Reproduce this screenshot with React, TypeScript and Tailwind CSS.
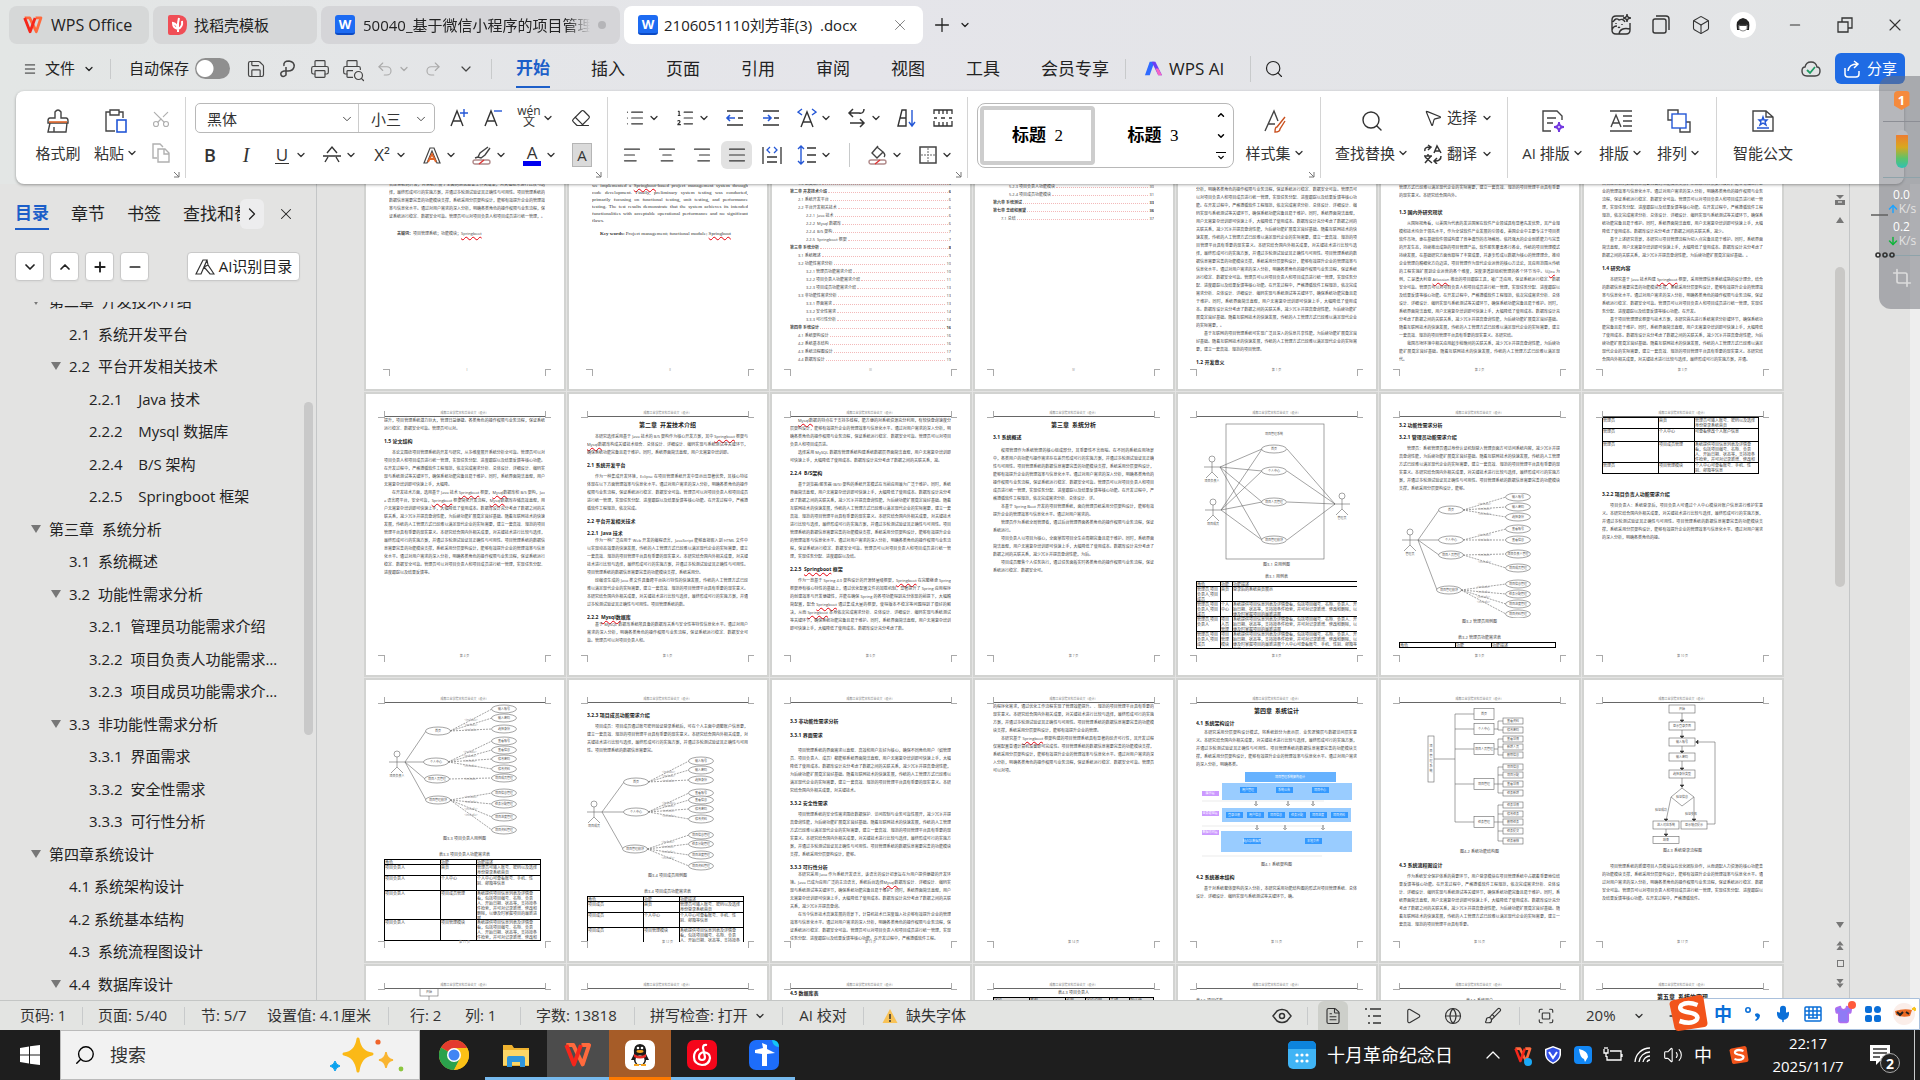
import type { ReactNode } from 'react';
import { clsx } from 'clsx';
import {
  AlignCenter, AlignJustify, AlignLeft, AlignRight, ArrowDown, ArrowUp, Box, Brush, ChevronDown, ChevronRight,
  ChevronUp, Copy, Crop, Eraser, FileText, Fullscreen, Globe, List, ListOrdered, Menu, Mic, Minus, MousePointer2,
  Play, Plus, Printer, Redo2, Save, Scissors, Search, Shirt, Undo2, Volume2, X,
} from 'lucide-react';

const PROSE =
  '项目管理系统的数据信息需要完善的功能模块支撑，系统采用分层架构设计，能够有效提升企业的管理效率与信息化水平。通过对用户需求的深入分析，明确各类角色的操作权限与业务流程，保证系统运行稳定、数据安全可靠。管理员可以对项目负责人和项目成员进行统一管理，实现任务分配、进度跟踪以及结果反馈等核心功能。在开发过程中，严格遵循软件工程规范，依次完成需求分析、总体设计、详细设计、编码实现与系统测试等关键环节，确保系统功能完备且易于维护。同时，系统界面简洁直观，用户无需复杂培训即可快速上手，大幅降低了使用成本。数据库设计充分考虑了数据之间的关联关系，减少冗余并提高查询性能，为后续功能扩展奠定良好基础。随着互联网技术的快速发展，传统的人工管理方式已经难以满足现代企业的实际需要，建立一套高效、规范的项目管理平台具有重要的现实意义。本研究结合国内外相关成果，对关键技术进行比较与选择，最终形成可行的实施方案，并通过多轮测试验证其正确性与可用性。';

const charWidth = (c: string) => (c.charCodeAt(0) < 256 ? 0.5 : 1);

// completes a paragraph so that it runs over the given number of lines
function fill(lead: string, lines: number, last = 0.6) {
  let width = 2;
  const limit = 40 * (lines - 1) + 40 * last;
  let out = '';
  for (const c of lead) {
    if (width >= limit) break;
    out += c;
    width += charWidth(c);
  }
  let i = (lead.length * 37 + lines * 61) % PROSE.length;
  while (width < limit) {
    out += PROSE[i % PROSE.length];
    width += 1;
    i += 1;
  }
  return out + '。';
}

/* ---------- document page parts ---------- */

function Spelled({ text }: { text: string }) {
  return (
    <>
      {text.split(/(Springboot|Mysql数|Jira|Atlassian)/).map((part, i) =>
        i % 2 ? (
          <span key={i} className="underline decoration-red-600 decoration-wavy decoration-1">{part}</span>
        ) : (
          part
        ),
      )}
    </>
  );
}

function P({ t = '', n, last, className, flush }: { t?: string; n: number; last?: number; className?: string; flush?: boolean }) {
  return (
    <p className={clsx('text-justify text-[4px] leading-[8px] break-all text-[#444]', !flush && 'indent-2', className)}>
      <Spelled text={fill(t, n, last)} />
    </p>
  );
}

const H = ({ children, className }: { children: string; className?: string }) => (
  <h3 className={clsx('text-[5px] leading-4 font-bold whitespace-pre text-[#222]', className)}>
    <Spelled text={children} />
  </h3>
);

const Chapter = ({ children }: { children: string }) => (
  <h2 className="text-center text-[6px] leading-4 font-bold whitespace-pre text-[#222]">{children}</h2>
);

const Caption = ({ children, className }: { children: string; className?: string }) => (
  <p className={clsx('text-center text-[4px] leading-[8px] text-[#444]', className)}>{children}</p>
);

function TocLine({ level, text, page }: { level: number; text: string; page: string }) {
  return (
    <div className={clsx('flex items-center gap-px text-[4px] leading-[8px] whitespace-pre text-[#444]', level === 0 && 'font-bold', level === 1 && 'pl-2', level === 2 && 'pl-4')}>
      <span>{text}</span>
      <span className="h-px flex-1 border-b border-dotted border-[#f3b9b9]" />
      <span>{page}</span>
    </div>
  );
}

interface PageProps {
  children?: ReactNode;
  no?: string;
  bind?: boolean;
  head?: boolean;
  bottom?: boolean;
  className?: string;
}

function Page({ children, no = '第 1 页', bind, head = true, bottom, className }: PageProps) {
  const l = bind ? 23 : 18;
  return (
    <article className={clsx('relative flex h-[281px] flex-col overflow-hidden bg-white ring-2 ring-[#d2d3d1]', bind ? 'pr-[19px] pl-[23px]' : 'pr-[19px] pl-[18px]')}>
      <header className={clsx('h-[23px] shrink-0 pt-[16px] text-center text-[3px] leading-[6px] text-[#777]', head && 'border-b border-[#666]')}>
        {head && '成都工业学院本科毕业论文（设计）'}
      </header>
      <div className={clsx('flex h-[239px] shrink-0 flex-col overflow-hidden', bottom && 'justify-end', className)}>{children}</div>
      <footer className="-mt-1 text-center text-[3px] leading-[8px] text-[#777]">{no}</footer>
      <svg className="absolute inset-0 size-full" viewBox="0 0 198 281" fill="none" stroke="#aaa" shapeRendering="crispEdges">
        <path d={`M${l} 17V23H${l - 6}M179 17V23H185M${l} 268V261H${l - 6}M179 268V261H185`} />
      </svg>
    </article>
  );
}

// drawings span the whole sheet width; y0 is where the drawing starts on the sheet
const Figure = ({ y0, y1, children }: { y0: number; y1: number; children: ReactNode }) => (
  <svg
    className="-mx-[18px] w-[198px] shrink-0"
    height={y1 - y0}
    viewBox={`0 ${y0} 198 ${y1 - y0}`}
    fill="none"
    stroke="#666"
    strokeWidth="0.6"
    fontSize="3"
    textAnchor="middle"
  >
    {children}
  </svg>
);

const Label = ({ x, y, children, fill = '#555' }: { x: number; y: number; children: string; fill?: string }) => (
  <text x={x} y={y + 1} fill={fill} stroke="none">{children}</text>
);

const Oval = ({ x, y, t }: { x: number; y: number; t: string }) => (
  <g>
    <ellipse cx={x} cy={y} rx="12.5" ry="4" fill="#fff" />
    <Label x={x} y={y}>{t}</Label>
  </g>
);

const Actor = ({ x, y, t }: { x: number; y: number; t: string }) => (
  <g>
    <ellipse cx={x} cy={y - 8} rx="3" ry="3" />
    <path d={`M${x} ${y - 5}V${y + 5}M${x - 8} ${y}H${x + 8}M${x} ${y + 5}L${x - 6} ${y + 11}M${x} ${y + 5}L${x + 6} ${y + 11}`} />
    <Label x={x} y={y + 14}>{t}</Label>
  </g>
);

interface Branch { x: number; y: number; t: string; kids: [number, string][] }

function UseCases({ actor, name, branches, kidX }: { actor: [number, number]; name: string; branches: Branch[]; kidX: number }) {
  return (
    <>
      {branches.map((b) => (
        <g key={b.t}>
          <path d={`M${actor[0] + 8} ${actor[1]}L${b.x - 12} ${b.y}`} />
          {b.kids.map(([y, t]) => (
            <g key={t}>
              <path d={`M${b.x + 12} ${b.y}L${kidX - 12} ${y}`} strokeDasharray="2 1" />
              <Label x={(b.x + kidX) / 2} y={(b.y + y) / 2} fill="#888">{'<include>'}</Label>
              <Oval x={kidX} y={y} t={t} />
            </g>
          ))}
          <Oval x={b.x} y={b.y} t={b.t} />
        </g>
      ))}
      <Actor x={actor[0]} y={actor[1]} t={name} />
    </>
  );
}

const LOGIN: string[] = ['输入账号', '输入密码', '选择身份'];
const CENTER: string[] = ['查看账号', '查看信息', '修改密码', '修改资料'];
const MANAGE: string[] = ['项目信息管理', '任务分配管理', '项目进度管理', '项目资料管理'];
const zip = (ys: number[], names: string[]) => ys.map((y, i) => [y, names[i]] as [number, string]);

function SheetTable({ cols, rows, className }: { cols: string[]; rows: [string, string[]][]; className?: string }) {
  return (
    <table className={clsx('table-fixed border-collapse text-left text-[4px] leading-[5px] text-[#444]', className)}>
      <colgroup>{cols.map((c, i) => <col key={i} className={c} />)}</colgroup>
      <tbody>
        {rows.map(([h, cells], r) => (
          <tr key={r} className={h}>
            {cells.map((c, i) => (
              <td key={i} className="border border-black p-0 align-top">
                <div className={clsx('overflow-hidden', h)}>{c}</div>
              </td>
            ))}
          </tr>
        ))}
      </tbody>
    </table>
  );
}

const HEAD_ROW = ['角色', '功能', '功能描述'];
const D1 = '管理员可输入账号、密码以及选择身份登录系统首页';
const D2 = '个人中心可查看账号、手机、性别、邮箱等信息';
const D3 = '系统提供项目信息列表及详情查看，包括项目编号、名称、负责人、开始日期、状态等，支持按条件检索，并可对记录新增、修改和删除，以便及时掌握项目的最新进展';

/* ---------- the pages ---------- */

const TOC: [number, string, string][] = [
  [1, '1.5 论文结构', '4'], [0, '第二章 开发技术介绍', '6'], [1, '2.1 系统开发平台', '6'], [1, '2.2 平台开发相关技术', '6'],
  [2, '2.2.1  Java 技术', '6'], [2, '2.2.2  Mysql 数据库', '6'], [2, '2.2.4  B/S 架构', '7'], [2, '2.2.5  Springboot 框架', '7'],
  [0, '第三章 系统分析', '8'], [1, '3.1 系统概述', '9'], [1, '3.2 功能性需求分析', '10'], [2, '3.2.1 管理员功能需求介绍', '10'],
  [2, '3.2.2 项目负责人功能需求介绍', '11'], [2, '3.2.3 项目成员功能需求介绍', '13'], [1, '3.3 非功能性需求分析', '13'],
  [2, '3.3.1 界面需求', '13'], [2, '3.3.2 安全性需求', '14'], [2, '3.3.3 可行性分析', '14'], [0, '第四章 系统设计', '16'],
  [1, '4.1 系统架构设计', '16'], [1, '4.2 系统基本结构', '16'], [1, '4.3 系统流程图设计', '17'], [1, '4.4 数据库设计', '19'],
];
const TOC_END: [number, string, string][] = [
  [1, '4.5 数据库表', '22'], [0, '第五章 系统的实现', '26'], [1, '5.1 登录模块', '26'], [1, '5.2 系统主要功能', '27'],
  [2, '5.2.1 管理员功能模块', '27'], [2, '5.2.2 信息管理模块', '28'], [2, '5.2.3 项目负责人功能模块', '30'],
  [2, '5.2.4 项目成员功能模块', '31'], [0, '第六章 系统测试', '33'], [0, '第七章 总结和展望', '36'], [1, '7.1 总结', '37'],
];

const Node = ({ x, y, t, w = 18, h = 8 }: { x: number; y: number; t: string; w?: number; h?: number }) => (
  <g>
    <rect x={x - w / 2} y={y - h / 2} width={w} height={h} fill="#fff" />
    <Label x={x} y={y}>{t}</Label>
  </g>
);

function Overview() {
  const cases: [number, string][] = [[55, '首页'], [77, '个人中心'], [108, '项目人员管理'], [146, '项目管理模块']];
  return (
    <Figure y0={23} y1={167}>
      <rect x="48" y="30" width="98" height="135" />
      <Label x={96} y={40}>项目管理系统</Label>
      {cases.map(([y, t]) => (
        <g key={t}>
          <path d={`M42 73L84 ${y}M43 116L84 ${y}M157 110L109 ${y}`} />
          <Oval x={96} y={y} t={t} />
        </g>
      ))}
      <Actor x={34} y={73} t="项目负责人" />
      <Actor x={35} y={116} t="项目成员" />
      <Actor x={164} y={110} t="管理员" />
    </Figure>
  );
}

function Architecture() {
  // first box, step between boxes, centre line
  const rows: { x: number; y: number; step: number; names: string[] }[] = [
    { x: 62, y: 113, step: 36, names: ['用户管理', '系统公告', '项目中心'] },
    { x: 48, y: 138, step: 21, names: ['登录注册', '用户信息', '项目信息', '任务分配', '项目进度', '项目资料'] },
    { x: 66, y: 164, step: 61, names: ['MySQL数据库', '本地文件'] },
  ];
  return (
    <Figure y0={92} y1={184}>
      <g stroke="none">
        <rect x="67" y="95" width="91" height="10" fill="#66b2ff" />
        <rect x="44" y="106" width="130" height="17" fill="#99ccff" />
        <rect x="44" y="131" width="129" height="14" fill="#99ccff" />
        <rect x="43" y="154" width="131" height="21" fill="#99ccff" />
        <rect x="24" y="114" width="17" height="5" fill="#cc99ff" />
        <rect x="24" y="134" width="17" height="5" fill="#cc99ff" />
        <rect x="24" y="153" width="17" height="5" fill="#cc99ff" />
        {rows.map((row) =>
          row.names.map((n, i) => (
            <g key={n}>
              <rect x={row.x + i * row.step} y={row.y - 3} width="17" height="6" fill="#3399ff" />
              <Label x={row.x + 8 + i * row.step} y={row.y} fill="#e8f4ff">{n}</Label>
            </g>
          )),
        )}
      </g>
      <Label x={112} y={100} fill="#fff">项目管理系统架构设计</Label>
      <Label x={32} y={116} fill="#fff">展示层</Label>
      <Label x={32} y={136} fill="#fff">业务逻辑层</Label>
      <Label x={32} y={155} fill="#fff">数据访问层</Label>
      <path d="M24 124H146M24 149H146M24 179H144" stroke="#ddd" />
      <path d="M78 124v4M110 124v4M135 124v4M79 148v4M107 148v4M145 148v4" stroke="#777" strokeWidth="1" />
      <path d="M76 127l2 2 2-2M108 127l2 2 2-2M133 127l2 2 2-2M77 151l2 2 2-2M105 151l2 2 2-2M143 151l2 2 2-2" stroke="#777" />
    </Figure>
  );
}

function Structure() {
  const groups: [number, string, [number, string][]][] = [
    [34, '首页', []],
    [49, '个人中心', [[41, '查看资料'], [50, '修改密码']]],
    [69, '项目人员管理', [[59, '查看详情'], [67, '新增人员'], [75, '删除信息']]],
    [104, '项目管理', [[87, '项目信息'], [95, '项目分配'], [104, '查看详情'], [113, '任务新增']]],
    [142, '任务管理', [[125, '任务详情'], [134, '修改任务'], [142, '删除任务'], [151, '任务提交'], [161, '任务审核']]],
  ];
  return (
    <Figure y0={23} y1={168}>
      <rect x="47" y="56" width="6" height="46" />
      {[...'项目管理系统'].map((c, i) => <Label key={i} x={50} y={66 + i * 5}>{c}</Label>)}
      <path d="M53 79H74M74 34V142" />
      {groups.map(([y, t, kids]) => (
        <g key={t}>
          <path d={`M74 ${y}H94`} />
          {kids.length > 0 && <path d={`M113 ${y}H117M117 ${kids[0][0]}V${kids[kids.length - 1][0]}`} />}
          {kids.map(([ky, kt]) => (
            <g key={kt}>
              <path d={`M117 ${ky}H122`} />
              <Node x={132} y={ky} t={kt} w={20} h={6} />
            </g>
          ))}
          <Node x={103} y={y} t={t} w={20} h={11} />
        </g>
      ))}
    </Figure>
  );
}

function LoginFlow() {
  const steps: [number, string][] = [[30, '开始'], [47, '显示登录页面'], [63, '输入账号'], [78, '输入密码'], [95, '选择身份类型']];
  return (
    <Figure y0={24} y1={168}>
      <path d="M98 30V110M87 118L82 142M110 118V142M82 150V160M123 145H131V63H111" />
      <path d="M96 41h4l-2 2zM96 57h4l-2 2zM96 72h4l-2 2zM96 89h4l-2 2zM96 106h4l-2 2zM80 140h4l-2 2zM108 140h4l-2 2zM80 155h4l-2 2zM114 61v4l-2-2z" fill="#333" stroke="#333" />
      {steps.map(([y, t]) => <Node key={t} x={98} y={y} t={t} w={26} />)}
      <path d="M98 109L110 118L98 127L87 118Z" fill="#fff" />
      <Label x={98} y={118}>验证信息</Label>
      <Label x={77} y={131}>验证成功</Label>
      <Label x={107} y={135}>验证失败</Label>
      <Node x={82} y={146} t="进入对应系统" w={26} />
      <Node x={110} y={146} t="显示错误提示" w={26} />
      <Node x={82} y={161} t="结束" w={26} h={7} />
    </Figure>
  );
}

function Pages() {
  return (
    <div className="-mt-[76px] grid grid-cols-[repeat(7,198px)] gap-x-[5px] gap-y-[5px]">
      <Page bind head={false} no="I">
        <P n={11} last={0.7} flush className="mt-0.5" t="本研究以项目管理为对象，分析管理员、项目负责人与项目成员的实际需求，对系统的可行性与安全性展开论述，并给出总体设计方案与数据库设计方案。在技术选型方面采用成熟的开发框架，兼顾系统的性能与可维护性，为后续功能扩展提供支持。通过调研国内外相关系统的现状，明确了系统应当具备的核心功能与关键业务流程，形成完整的需求规格说明，并基于系统需求分析结果，本研究首先完成了功能模块划分与数据库架构设计，随后根据总体功能模块设计方案构建系统开发框架，最终运用Springboot技术实现了项目管理系统的开发，对系统开展了全面的测试验证工作" />
        <p className="mt-[9px] indent-2 text-[4px] leading-[8px] text-[#444]"><b>关键词：</b>项目管理系统；功能模块；<Spelled text="Springboot" /></p>
      </Page>
      <Page bind head={false} bottom no="II" className="pb-[132px] font-['Liberation_Serif',serif]">
        <p className="text-justify text-[5px] leading-[7px] text-[#333]">
          This study takes project management as its subject and analyses the needs of administrators, leaders and members. Based on system requirements analysis, key system functional modules were determined and relational connections were designed. Following the system's overall functional module framework, we implemented a <Spelled text="Springboot" />-based project management system through code development. Finally, preliminary system testing was conducted, primarily focusing on functional testing, unit testing, and performance testing. The test results demonstrate that the system achieves its intended functionalities with acceptable operational performance and no significant flaws.
        </p>
        <p className="mt-1.5 indent-2 text-[5px] leading-[8px] text-[#333]"><b>Key words:</b> Project management; functional module; <Spelled text="Springboot" /></p>
      </Page>
      <Page head={false} bottom no="III" className="pb-1.5">
        {TOC.map(([level, text, page]) => <TocLine key={text} level={level} text={text} page={page} />)}
      </Page>
      <Page head={false} no="IV" className="pt-1">
        {TOC_END.map(([level, text, page]) => <TocLine key={text} level={level} text={text} page={page} />)}
      </Page>
      <Page bottom no="第 1 页">
        <P n={23} last={0.1} t="随着云计算、大数据、人工智能、统计算法的迅速发展，各领域的项目越来越庞大复杂" />
        <P n={3} last={0.4} t="基于互联网的项目管理系统可实现广泛且深入的信息共享" />
        <H>1.2 开发意义</H>
      </Page>
      <Page bottom no="第 2 页" className="pb-1.5">
        <P n={8} last={0.4} flush />
        <H className="mt-1">1.3 国内外研究现状</H>
        <P n={15} last={0.7} t="从国际视角看，以美国为代表的发达国家在软件产业领域具有显著先发优势，其产业规模和技术均处于领先水平，作为全球软件产业发展的引领者，美国企业中主要专注于项目类软件市场，更在基础软件领域构建了竞争激烈的市场格局。依托强大的企业创新能力与完善的开发生态，持续推出成熟的项目管理产品，软件服务覆盖各行各业，传统的项目管理模式持续发展，在基础研究方面也取得了丰富成果，并逐步形成以数据为核心的管理理念，推动企业管理向精细化方向迈进，项目管理作为现代企业运营的核心方法论，其应用范围从传统的工程实施扩展到企业运营的各个维度，深度渗透到组织管理的各个环节当中。以Jira 为例，它是澳大利亚 Atlassian 推出的项目跟踪工具，被广泛应用" />
        <P n={2} last={1} t="我国市场环境中相关应用起步稍晚" />
      </Page>
      <Page bottom no="第 3 页" className="pb-1.5">
        <P n={11} last={0.8} flush />
        <P n={3} last={0.9} t="基于上述研究背景，本研究以项目管理流程为切入点" />
        <H>1.4 研究内容</H>
        <P n={5} last={0.6} t="本研究基于 Java 技术构建 Springboot 框架，采用管理信息系统成熟的设计理念，结合" />
        <P n={6} last={0.9} t="基于项目管理理论框架与技术方案，本研究首先进行系统需求分析" />
      </Page>

      <Page no="第 4 页">
        <P n={2} last={0.5} flush t="提升，项目管理系统潜力巨大，管理日益便捷。" />
        <H>1.5 论文结构</H>
        <P n={5} last={0.4} t="本论文围绕项目管理系统的开发与研究，从多维度展开系统分析" />
        <P n={11} last={0.3} t="在开发技术方面，选用基于 Java 技术 Springboot 框架，Mysql数据库和 B/S 架构，Java 语言跨平台，安全可靠，Springboot 框架简化开发流程，Mysql数据库存储高效" />
      </Page>
      <Page no="第 5 页">
        <Chapter>第二章  开发技术介绍</Chapter>
        <P n={3} last={0.9} t="本研究选择采用基于 Java 技术的 B/S 架构作为核心开发方案，其中 Springboot 框架与Mysql数据库构成关键技术组合" />
        <H>2.1 系统开发平台</H>
        <P n={5} last={0.3} t="作为一种集成开发环境，Eclipse 在项目管理系统开发中显示出显著优势，其核心特征体现在以下方面" />
        <H className="-mb-1">2.2 平台开发相关技术</H>
        <H className="-mb-1">2.2.1  Java 技术</H>
        <P n={5} last={0.7} t="作为一种广泛应用于 Web 开发的编程语言，JavaScript 能够直接嵌入到 HTML 文件中以实现动态效果" />
        <P n={4} last={0.6} t="经编译生成的 Java 类文件具备跨平台执行特性" />
        <H className="-mb-1">2.2.2  Mysql数据库</H>
        <P n={3} last={0.3} t="基于 MySQL 数据库系统所具备的数据库关系与安全性等特性" />
      </Page>
      <Page no="第 6 页">
        <P n={4} last={0.2} t="Mysql数据的特点在于支持多线程，能方便的对系统资源充分利用，有较快查询速度" />
        <P n={2} last={0.9} t="选择采用 MySQL 数据库管理系统构建系统数据层" />
        <H>2.2.4  B/S架构</H>
        <P n={10} last={0.4} t="基于浏览器/服务器 (B/S) 架构的系统开发模式在当前应用最为广泛" />
        <H>2.2.5  Springboot 框架</H>
        <P n={7} last={0.7} t="作为一款基于 Spring 4.0 架构设计的开源轻量级框架，Springboot 在完整继承 Spring 框架原有核心特性的基础上，通过优化配置文件的加载机制，显著提升了 Spring 应用程序的创建效率与开发便捷性，并能在确保 Spring 的各项功能得到充分体现的前提下，大幅精简配置，配合 Springboot 通过集成大量的框架，使得版本不稳定等问题得到了很好的解决，从而 Springboot 本身" />
      </Page>
      <Page no="第 7 页">
        <Chapter>第三章  系统分析</Chapter>
        <H className="-mt-1">3.1 系统概述</H>
        <P n={7} last={0.6} className="mt-0.5" t="权限管理作为系统管理的核心组成部分，其重要性不言而喻。在不同的系统应用场景中，各类用户的功能与操作需求存在差异" />
        <P n={2} last={0.6} t="本基于 Spring Boot 开发的项目管理系统，面向管理员" />
        <P n={2} last={0.1} t="管理员作为系统全局管理者，通过后台管理界面" />
        <P n={3} last={0.6} t="项目负责人以项目为核心，全面掌控项目全生命周期" />
        <P n={2} last={0.3} t="项目成员聚焦个人任务执行，通过任务面板实时" />
      </Page>
      <Page no="第 8 页">
        <Overview />
        <Caption>图3-1 总用例图</Caption>
        <Caption className="mt-1">表3-1 用例表</Caption>
        <SheetTable
          className="w-[165px]"
          cols={['w-6', 'w-3', 'w-auto']}
          rows={[
            ['h-1', HEAD_ROW],
            ['h-3.5', ['管理员,项目负责人,项目成员', '首页', '登录后的系统首页展示']],
            ['h-3.5', ['管理员,项目负责人,项目成员', '个人中心', D3]],
            ['h-3.5', ['管理员,项目负责人', '项目人员管理', D3]],
            ['h-4', ['管理员,项目负责人,项目成员', '项目管理模块', D3 + D2]],
          ]}
        />
      </Page>
      <Page no="第 9 页">
        <H className="-mb-1">3.2 功能性需求分析</H>
        <H>3.2.1 管理员功能需求介绍</H>
        <P n={6} last={0.4} t="管理员：系统管理员通过身份认证机制登入管理页面方可访问系统内容" />
        <Figure y0={99} y1={224}>
          <UseCases
            actor={[29, 146]}
            name="管理员"
            kidX={137}
            branches={[
              { x: 70, y: 116, t: '首页', kids: zip([103, 113, 123], LOGIN) },
              { x: 70, y: 146, t: '个人中心', kids: zip([135, 146], CENTER) },
              { x: 70, y: 161, t: '项目人员管理', kids: zip([160, 174], ['项目负责人管理', '项目成员管理']) },
              { x: 68, y: 196, t: '项目管理模块', kids: zip([190, 200, 210, 220], MANAGE) },
            ]}
          />
        </Figure>
        <Caption>图3-2 管理员用例图</Caption>
        <Caption className="mt-2">表3-2 管理员功能需求表</Caption>
        <SheetTable className="w-[157px]" cols={['w-14', 'w-9', 'w-auto']} rows={[['h-1', HEAD_ROW]]} />
      </Page>
      <Page no="第 10 页">
        <SheetTable
          className="w-[157px]"
          cols={['w-14', 'w-9', 'w-auto']}
          rows={[
            ['h-2.5', ['管理员', '首页', D1]],
            ['h-3', ['管理员', '个人中心', '可查看修改个人账户信息']],
            ['h-5', ['管理员', '项目成员管理', D3]],
            ['h-2.5', ['管理员', '项目管理模块', D2]],
          ]}
        />
        <H className="mt-3">3.2.2 项目负责人功能需求介绍</H>
        <P n={5} last={0.3} t="项目负责人：系统登录后，项目负责人可通过个人中心模块对账户信息进行维护" />
      </Page>

      <Page no="第 11 页">
        <Figure y0={24} y1={164}>
          <UseCases
            actor={[31, 83]}
            name="项目负责人"
            kidX={138}
            branches={[
              { x: 72, y: 52, t: '首页', kids: zip([30, 39, 50], LOGIN) },
              { x: 70, y: 83, t: '个人中心', kids: zip([62, 71, 80, 90], CENTER) },
              { x: 71, y: 100, t: '项目人员管理', kids: [[99, '项目成员管理']] },
              { x: 72, y: 121, t: '项目管理模块', kids: zip([114, 125, 138, 151], MANAGE) },
            ]}
          />
        </Figure>
        <Caption className="-mt-2">图3-3 项目负责人用例图</Caption>
        <Caption className="mt-2">表3-3 项目负责人功能需求表</Caption>
        <SheetTable
          className="w-[157px]"
          cols={['w-14', 'w-9', 'w-auto']}
          rows={[
            ['h-1', HEAD_ROW],
            ['h-2.5', ['项目负责人', '首页', D1]],
            ['h-3.5', ['项目负责人', '个人中心', D2]],
            ['h-7', ['项目负责人', '项目成员管理', D3]],
            ['h-5', ['项目负责人', '项目管理模块', D3]],
          ]}
        />
      </Page>
      <Page no="第 12 页">
        <H className="mt-1">3.2.3 项目成员功能需求介绍</H>
        <P n={4} last={0.4} t="项目成员：项目成员通过账号密码验证登录系统后，可在个人主面中调整账户信息" />
        <Figure y0={76} y1={193}>
          <UseCases
            actor={[25, 133]}
            name="项目成员"
            kidX={132}
            branches={[
              { x: 67, y: 103, t: '首页', kids: zip([82, 91, 101], LOGIN) },
              { x: 67, y: 133, t: '个人中心', kids: zip([114, 121, 130, 140], CENTER) },
              { x: 66, y: 170, t: '项目管理模块', kids: zip([156, 165, 176, 187], MANAGE) },
            ]}
          />
        </Figure>
        <Caption>图3-4 项目成员用例图</Caption>
        <Caption className="mt-2">表3-4 项目成员功能需求表</Caption>
        <SheetTable
          className="w-[157px]"
          cols={['w-14', 'w-9', 'w-auto']}
          rows={[
            ['h-1', HEAD_ROW],
            ['h-2.5', ['项目成员', '首页', D1]],
            ['h-3.5', ['项目成员', '个人中心', D2]],
            ['h-3.5', ['项目成员', '项目管理模块', D3]],
          ]}
        />
      </Page>
      <Page no="第 13 页">
        <H className="mt-2.5 -mb-0.5">3.3 非功能性需求分析</H>
        <H>3.3.1 界面需求</H>
        <P n={6} last={0.4} className="mt-1" t="项目管理系统的界面需求以直观、高效和用户友好为核心，确保不同角色用户（如管理员、项目负责人、成员）都能够" />
        <H>3.3.2 安全性需求</H>
        <P n={6} last={0.4} t="项目管理系统的安全性需求围绕数据保护、访问控制与业务可靠性展开" />
        <H className="-mb-1">3.3.3 可行性分析</H>
        <P n={5} last={0.3} t="本研究采用 Java 作为系统开发语言，该语言的设计初衷旨在为用户提供便捷的开发环境。Java 已成为应用广泛的主流语言，系统后台选择Mysql数据库" />
        <P n={4} last={0.9} t="在当今信息技术高速发展的背景下，计算机技术已深度融入社会" />
      </Page>
      <Page no="第 14 页">
        <P n={4} last={0.7} flush t="的程序化需求，通过优化工作流程实现了管理效能提升。" />
        <P n={5} last={0.1} t="本研究基于 Springboot 框架构建的项目管理系统具有显著的经济可行性，其开发过程仅需配置普通计算机设备即可完成" />
      </Page>
      <Page no="第 15 页">
        <Chapter>第四章  系统设计</Chapter>
        <H className="-mt-1 -mb-0.5">4.1 系统架构设计</H>
        <P n={5} last={0.2} t="本研究采用分层架构设计模式，将系统划分为表示层、业务逻辑层与数据访问层" />
        <Architecture />
        <Caption>图4-1 系统架构图</Caption>
        <H>4.2 系统基本结构</H>
        <P n={2} last={0.6} t="基于对系统整体架构的深入分析，本研究采用功能结构图的形式对项目管理系统" />
      </Page>
      <Page no="第 16 页">
        <Structure />
        <Caption>图4-2 系统功能结构图</Caption>
        <H className="mt-px">4.3 系统流程图设计</H>
        <P n={7} last={0.4} t="作为系统安全保护体系的首要环节，用户登录模块在项目管理系统中占据着重要地位" />
      </Page>
      <Page no="第 17 页">
        <LoginFlow />
        <Caption>图4-3 系统登录流程图</Caption>
        <P n={5} last={0.6} className="mt-2" t="项目管理系统的新建项目人员模块旨在优化团队协作，从而调配人力资源的核心功能" />
      </Page>

      <Page>
        <Figure y0={23} y1={60}>
          <path d="M63 29V42" />
          <Node x={63} y={26} t="开始" />
          <Node x={63} y={39} t="新建项目人员" />
        </Figure>
      </Page>
      <Page />
      <Page><H className="-mt-1">4.5 数据库表</H></Page>
      <Page>
        <Caption>表4-3 项目负责人</Caption>
        <SheetTable
          className="w-full bg-[#ddd]"
          cols={['w-9', 'w-9', 'w-5', 'w-6', 'w-5', 'w-auto']}
          rows={[['h-3', ['字段', '类型', '长度', '字段说明', '主键', '默认值']]]}
        />
      </Page>
      <Page><Caption className="mt-2 self-start">表4-5 项目任务</Caption></Page>
      <Page><Caption className="mt-2">表4-6 系统用户</Caption></Page>
      <Page><Chapter>第五章  系统的实现</Chapter></Page>
    </div>
  );
}

/* ---------- window chrome ---------- */

const Rule = ({ className }: { className?: string }) => <span className={clsx('w-px shrink-0 bg-[#c8cacb]', className)} />;

const Tiny = ({ className }: { className?: string }) => <ChevronDown className={clsx('size-3 shrink-0', className)} strokeWidth={2.5} />;

const WpsMark = ({ className }: { className?: string }) => (
  <svg className={className} viewBox="0 0 24 24" fill="none" strokeWidth="3.4" strokeLinejoin="round">
    <path d="M2 3.5H8L16 20 21.5 3.5H15" stroke="#ff6a3d" />
    <path d="M2 3.5L8.5 20L14.5 3.5" stroke="#f5261b" />
  </svg>
);

const WordMark = () => (
  <span className="flex size-5 shrink-0 items-center justify-center rounded-[3px] border-b-2 border-[#0c4ac4] bg-[#1d6bf2] text-[13px] leading-none font-bold text-white">W</span>
);

function TitleBar() {
  return (
    <div className="flex h-[50px] shrink-0 items-center gap-1 pl-[9px] text-[15px]">
      <button className="flex h-[38px] w-[140px] items-center gap-2 rounded-lg bg-[#d6d8d8] pl-[14px] text-[16px]"><WpsMark className="size-5" />WPS Office</button>
      <button className="flex h-[38px] w-[164px] items-center gap-1.5 rounded-lg bg-[#d6d7d8] pl-[15px]">
        <svg className="size-5" viewBox="0 0 20 20"><path d="M2 0H11Q20 1 19 10Q19 19 11 20H2Q0 20 0 18V2Q0 0 2 0Z" fill="#f04e56" /><path d="M10 17V8M10 14Q5 13 5 8Q9 9 10 14Q15 12 14 6M10 8L11 3" stroke="#fff" strokeWidth="2" fill="none" /></svg>
        找稻壳模板
      </button>
      <button className="flex h-[38px] w-[299px] items-center gap-2 rounded-lg bg-[#d5d5d8] px-[14px]">
        <WordMark />
        <span className="flex-1 overflow-hidden mask-r-from-90% text-left whitespace-nowrap">50040_基于微信小程序的项目管理系统</span>
        <span className="size-2 rounded-full bg-[#b5b5b8]" />
      </button>
      <button className="flex h-[38px] w-[299px] items-center gap-1.5 rounded-lg bg-white px-[14px]">
        <WordMark />
        <span className="flex-1 text-left whitespace-pre">2106051110刘芳菲(3)  .docx</span>
        <X className="size-[18px] text-[#777]" strokeWidth={1.2} />
      </button>
      <button className="ml-1 flex items-center gap-1.5" aria-label="新建标签"><Plus className="size-[22px]" strokeWidth={1.4} /><Tiny /></button>
      <div className="ml-auto flex items-center text-[#333]">
        <button className="flex w-10 justify-center" aria-label="助手">
          <svg className="size-[22px]" viewBox="0 0 22 22" fill="none" stroke="currentColor" strokeWidth="1.4"><path d="M14 2H6Q2 2 2 6V16Q2 20 6 20H16Q20 20 20 16V9M3 8Q6 3 9 6Q13 4 15 8M2 16Q3 12 7 12M9 20Q10 13 20 15M17 0Q17 4 21 4Q17 4 17 8Q17 4 13 4Q17 4 17 0Z" /><path d="M6 9V10M12 10V11M8 13Q9 14 10 13" /></svg>
        </button>
        <button className="flex w-10 justify-center" aria-label="窗口">
          <svg className="size-5" viewBox="0 0 20 20" fill="none" stroke="currentColor" strokeWidth="1.4"><rect x="2" y="4" width="13" height="14" rx="2" /><path d="M5 1H15Q18 1 18 4V15" /></svg>
        </button>
        <button className="flex w-10 justify-center" aria-label="工作台"><Box className="size-5" strokeWidth={1.3} /></button>
        <button className="flex w-11 justify-center" aria-label="账号">
          <svg className="size-[26px]" viewBox="0 0 26 26"><circle cx="13" cy="13" r="13" fill="#fff" /><path d="M7 18Q5 7 13 6Q21 7 19 18Z" fill="#222" /><path d="M9 13H17V17Q13 21 9 17Z" fill="#fff" stroke="#888" /><path d="M9 13H17M11 10V14M13 10V14M15 10V14" stroke="#222" strokeWidth="1.2" /></svg>
        </button>
        <button className="ml-[5px] flex w-[50px] justify-center" aria-label="最小化"><Minus className="size-4" strokeWidth={1.6} /></button>
        <button className="flex w-[50px] justify-center" aria-label="还原">
          <svg className="size-4" viewBox="0 0 16 16" fill="none" stroke="currentColor" strokeWidth="1.3"><path d="M1 5H11V15H1ZM5 5V1H15V11H11" /></svg>
        </button>
        <button className="flex w-[50px] justify-center" aria-label="关闭"><X className="size-5" strokeWidth={1.3} /></button>
      </div>
    </div>
  );
}

function MenuBar() {
  const tabs = ['插入', '页面', '引用', '审阅', '视图', '工具', '会员专享'];
  return (
    <div className="flex h-[41px] shrink-0 items-center pr-[15px] pb-1 pl-[23px] text-[15px]">
      <button className="flex items-center gap-2"><Menu className="size-[14px]" strokeWidth={1.6} />文件<Tiny /></button>
      <Rule className="mr-[14px] ml-[15px] h-5" />
      <label className="flex items-center gap-1.5 pl-1" htmlFor="autosave">自动保存
        <input id="autosave" type="checkbox" className="h-[21px] w-[35px] appearance-none rounded-full bg-[#8f8f8f] bg-[radial-gradient(circle_at_10px_50%,white_8px,transparent_9px)]" />
      </label>
      <div className="ml-4 flex items-center gap-3 text-[#444]">
        <button aria-label="保存"><Save className="size-5" strokeWidth={1.4} /></button>
        <button aria-label="输出为PDF"><svg className="size-5" viewBox="0 0 20 20" fill="none" stroke="currentColor" strokeWidth="1.5"><path d="M6 7Q5 2 11 2Q17 3 16 8Q15 12 10 12H6Q2 13 3 16Q5 19 8 16V8" /></svg></button>
        <button aria-label="打印"><Printer className="size-5" strokeWidth={1.4} /></button>
        <button aria-label="打印预览" className="relative"><Printer className="size-5" strokeWidth={1.4} /><Search className="absolute right-[-3px] bottom-[-3px] size-3 bg-[#e4e5e6]" strokeWidth={2.4} /></button>
        <button aria-label="撤销" className="ml-0.5 flex items-center gap-1 text-[#aaa]"><Undo2 className="size-[18px]" strokeWidth={1.5} /><Tiny /></button>
        <button aria-label="恢复" className="ml-0.5 text-[#aaa]"><Redo2 className="size-[18px]" strokeWidth={1.5} /></button>
        <button aria-label="更多"><ChevronDown className="ml-1 size-4" strokeWidth={1.8} /></button>
      </div>
      <Rule className="mr-6 ml-[17px] h-5" />
      <nav className="flex items-center gap-[41px] text-[17px] whitespace-nowrap">
        <button className="-my-2 border-b-2 border-[#1d5fc9] py-1.5 leading-6 font-bold text-[#1d5fc9]">开始</button>
        {tabs.map((t) => <button key={t}>{t}</button>)}
      </nav>
      <Rule className="mr-[18px] ml-4 h-5" />
      <button className="flex items-center gap-1.5 text-[17px]">
        <svg className="size-[19px]" viewBox="0 0 20 20"><path d="M6 3H11L6 17H1Z" fill="#2f6bff" /><path d="M8 3H12L19 17H15Z" fill="#6a3df5" /><path d="M12 10L15 17H19L15 10Z" fill="#f765c4" /></svg>
        WPS AI
      </button>
      <Rule className="mr-[13px] ml-[26px] h-[26px]" />
      <button aria-label="搜索"><Search className="size-5" strokeWidth={1.4} /></button>
      <button aria-label="云同步" className="mr-[14px] ml-auto">
        <svg className="size-5" viewBox="0 0 20 20" fill="none" strokeWidth="1.4"><path d="M6 17Q1 17 1 12Q1 8 4 8Q5 3 10 3Q15 3 16 8Q19 8 19 12Q19 17 14 17Z" stroke="#444" /><path d="M6 11L9 14L14 8" stroke="#1d9a62" strokeWidth="1.8" /></svg>
      </button>
      <button className="flex h-[31px] w-[70px] items-center justify-center gap-1.5 rounded-md bg-[#1f6be4] text-[15px] text-white">
        <svg className="size-[18px]" viewBox="0 0 18 18" fill="none" stroke="currentColor" strokeWidth="1.5"><path d="M2 8V14Q2 17 5 17H13Q16 17 16 14V11M5 11Q6 4 14 4M11 1L15 4L11 8" /></svg>分享
      </button>
    </div>
  );
}

function Cell({ label, children, chev, className }: { label: string; children: ReactNode; chev?: boolean; className?: string }) {
  return (
    <button aria-label={label} className={clsx('flex h-7 items-center', chev ? 'justify-start gap-[3px] pl-2' : 'w-9 justify-center', className)}>
      {chev ? <span className="flex w-5 justify-center">{children}</span> : children}
      {chev && <Tiny />}
    </button>
  );
}

const Big = ({ label, chev, children, className }: { label: string; chev?: boolean; children: ReactNode; className?: string }) => (
  <button className={clsx('flex flex-col items-center gap-2 pt-4 text-[15px] leading-5 whitespace-nowrap', className)}>
    <span className="flex h-7 items-center">{children}</span>
    <span className="flex items-center gap-0.5">{label}{chev && <Tiny />}</span>
  </button>
);

const Launcher = () => (
  <svg className="absolute right-[5px] bottom-0 size-[7px]" viewBox="0 0 7 7" fill="none" stroke="#777"><path d="M1 1L6 6M6 1V6H1" /></svg>
);

const Group = ({ children, className }: { children: ReactNode; className?: string }) => (
  <div className={clsx('relative my-1.5 flex border-r border-[#d4d4d4]', className)}>{children}</div>
);

const ic = 'size-5';
const sw = 1.4;

function Ribbon() {
  return (
    <div className="z-10 mx-4 flex h-[93px] shrink-0 rounded-lg bg-white text-[#333] shadow-[0_1px_3px_rgba(0,0,0,0.35)]">
      <Group className="w-[170px] pl-[18px]">
        <Big label="格式刷" className="-mt-1.5 w-12"><svg className="size-6" viewBox="0 0 24 24" fill="none" stroke="#444" strokeWidth="1.4"><path d="M9 9V3Q12 -1 15 3V9H20Q22 9 22 12V14H2V12Q2 9 4 9ZM4 14L2 23H20L21 14M8 18V23" /><path d="M3 13H21" stroke="#e0662a" strokeWidth="1.6" /></svg></Big>
        <Big label="粘贴" chev className="-mt-1.5 ml-2.5 w-12"><svg className="size-6" viewBox="0 0 24 24" fill="none" stroke="#444" strokeWidth="1.4"><path d="M6 3H2V22H11M15 3H19V9M6 1H15V6H6Z" /><rect x="13" y="11" width="9" height="12" stroke="#2457d6" strokeWidth="1.6" /></svg></Big>
        <div className="-mt-1 flex flex-col justify-center gap-3.5 pl-[11px] text-[#b0b0b0]">
          <button aria-label="剪切"><Scissors className="size-5 -rotate-90" strokeWidth={sw} /></button>
          <button aria-label="复制"><svg className="size-5" viewBox="0 0 20 20" fill="none" stroke="currentColor" strokeWidth="1.4"><path d="M6 15H2V1H9L12 4M7 6H14L18 10V19H7ZM13 6V11H18" /></svg></button>
        </div>
        <Launcher />
      </Group>

      <Group className="w-[422px] flex-col gap-1 pt-[6px]">
        <div className="flex items-center pl-[9px]">
          <div className="flex h-[30px] w-[240px] rounded-[5px] border border-[#b8b8b8] text-[15px]">
            <div className="relative w-[163px] border-r border-[#ccc]">
              <input aria-label="字体" defaultValue="黑体" className="h-full w-full bg-transparent pl-[11px] outline-none" />
              <ChevronDown className="absolute top-2 right-1 size-[14px]" strokeWidth={1.5} />
            </div>
            <div className="relative flex-1">
              <input aria-label="字号" defaultValue="小三" className="h-full w-full bg-transparent pl-3 outline-none" />
              <ChevronDown className="absolute top-2 right-1.5 size-[14px]" strokeWidth={1.5} />
            </div>
          </div>
          <Cell label="增大字号" className="ml-1.5"><svg className={ic} viewBox="0 0 20 20" fill="none" stroke="currentColor" strokeWidth="1.4"><path d="M2 18L8 3L14 18M4 13H12" /><path d="M15 1V9M11 5H19" stroke="#2457d6" /></svg></Cell>
          <Cell label="减小字号" className="-ml-0.5"><svg className={ic} viewBox="0 0 20 20" fill="none" stroke="currentColor" strokeWidth="1.4"><path d="M2 18L8 3L14 18M4 13H12" /><path d="M11 3H19" stroke="#2457d6" /></svg></Cell>
          <Cell label="拼音指南" chev className="w-[52px]"><span className="flex flex-col items-center pb-1 text-[12px] leading-[11px]"><span>wén</span><span>文</span></span></Cell>
          <Cell label="清除格式"><Eraser className={ic} strokeWidth={sw} /></Cell>
        </div>
        <div className="flex items-center pt-1 pl-[6px]">
          <Cell label="加粗" className="text-[18px] font-semibold">B</Cell>
          <Cell label="倾斜" className="font-['Liberation_Serif',serif] text-[20px] italic">I</Cell>
          <Cell label="下划线" chev className="w-[50px]"><span className="w-[14px] border-b border-current text-[17px] leading-[17px]">U</span></Cell>
          <Cell label="删除线" chev className="w-[50px]"><svg className={ic} viewBox="0 0 20 20" fill="none" stroke="currentColor" strokeWidth="1.4"><path d="M5 8L10 2L15 8M3 17L6 12M17 17L14 12M1 11H19" /></svg></Cell>
          <Cell label="上标" chev className="w-[50px] text-[17px]"><span>X²</span></Cell>
          <Cell label="文字效果" chev className="w-[50px]"><svg className="size-[18px]" viewBox="0 0 18 18" fill="none"><path d="M1 17L7 2H11L17 17H14L9 5L4 17Z" stroke="#444" strokeWidth="1.2" /><path d="M5 16L9 8L13 16M7 13H11" stroke="#e0662a" strokeWidth="1.8" /></svg></Cell>
          <Cell label="突出显示" chev className="w-[50px]"><svg className={ic} viewBox="0 0 20 20" fill="none" stroke="#444" strokeWidth="1.4"><path d="M16 2L8 8L6 12L9 13L13 10L18 3M6 12L3 13" /><rect x="1" y="15" width="17" height="4" rx="2" stroke="#b08a8a" /><path d="M7 19L12 15" stroke="#d33" /></svg></Cell>
          <Cell label="字体颜色" chev className="w-[50px] text-[17px]"><span className="border-b-[5px] border-[#0000f0] px-1 leading-[17px]">A</span></Cell>
          <Cell label="字符底纹"><span className="w-5 border border-[#b5b5b5] bg-[#dadada] text-center text-[15px] leading-[22px]">A</span></Cell>
        </div>
        <Launcher />
      </Group>

      <Group className="w-[360px] flex-col gap-1 pt-[6px]">
        <div className="flex h-[30px] items-center pl-[9px]">
          <Cell label="项目符号" chev className="w-[50px]"><List className={ic} strokeWidth={sw} /></Cell>
          <Cell label="编号" chev className="w-[50px]"><ListOrdered className={ic} strokeWidth={sw} /></Cell>
          <Cell label="减少缩进"><svg className={ic} viewBox="0 0 20 20" fill="none" stroke="currentColor" strokeWidth="1.4"><path d="M2 3H18M13 10H18M2 17H18" /><path d="M2 10H10M5 7L2 10L5 13" stroke="#2457d6" strokeWidth="1.6" /></svg></Cell>
          <Cell label="增加缩进"><svg className={ic} viewBox="0 0 20 20" fill="none" stroke="currentColor" strokeWidth="1.4"><path d="M2 3H18M13 10H18M2 17H18" /><path d="M2 10H10M7 7L10 10L7 13" stroke="#2457d6" strokeWidth="1.6" /></svg></Cell>
          <Cell label="中文版式" chev className="w-[50px]"><svg className={ic} viewBox="0 0 20 20" fill="none" stroke="currentColor" strokeWidth="1.4"><path d="M4 19L10 4L16 19M6 14H14" /><path d="M5 1L1 4L5 7M15 1L19 4L15 7" stroke="#2457d6" /></svg></Cell>
          <Cell label="换行" chev className="w-[50px]"><svg className={ic} viewBox="0 0 20 20" fill="none" stroke="currentColor" strokeWidth="1.5"><path d="M6 1L2 5L6 9M2 5H12Q17 6 17 1M3 15H17M13 11L17 15L13 19" /></svg></Cell>
          <Cell label="排序"><svg className={ic} viewBox="0 0 20 20" fill="none" stroke="currentColor" strokeWidth="1.4"><path d="M1 18L5 2H9V18ZM3 10H9" /><path d="M15 2V18M12 14L15 18L18 14" stroke="#2457d6" /></svg></Cell>
          <Cell label="制表位"><svg className={ic} viewBox="0 0 20 20" fill="none" stroke="currentColor" strokeWidth="1.3"><path d="M1 6V2H19V6M1 13V18H19V13M1 10H4M8 10H12M16 10H19M6 2V6M10 2V6M14 2V6M6 14V18M10 14V18M14 14V18" /></svg></Cell>
        </div>
        <div className="flex items-center pt-1 pl-[6px]">
          <Cell label="左对齐" className="w-[35px]"><AlignLeft className={ic} strokeWidth={sw} /></Cell>
          <Cell label="居中" className="w-[35px]"><AlignCenter className={ic} strokeWidth={sw} /></Cell>
          <Cell label="右对齐" className="w-[35px]"><AlignRight className={ic} strokeWidth={sw} /></Cell>
          <Cell label="两端对齐" className="mx-[2px] w-[31px] rounded-md bg-[#e2e2e2]"><AlignJustify className={ic} strokeWidth={sw} /></Cell>
          <Cell label="分散对齐" className="w-[35px]"><svg className={ic} viewBox="0 0 20 20" fill="none" stroke="currentColor" strokeWidth="1.3"><path d="M1 2V19M19 2V19M5 12H15M5 17H15" /><path d="M8 2L5 5L8 8M12 2L15 5L12 8" stroke="#2457d6" /></svg></Cell>
          <Cell label="行距" chev className="w-[50px]"><svg className={ic} viewBox="0 0 20 20" fill="none" stroke="currentColor" strokeWidth="1.4"><path d="M10 3H19M10 10H19M10 17H19" /><path d="M4 1V19M1 4L4 1L7 4M1 16L4 19L7 16" stroke="#2457d6" /></svg></Cell>
          <Rule className="mx-[10px] h-6" />
          <Cell label="底纹" chev className="w-[50px]"><svg className={ic} viewBox="0 0 20 20" fill="none" stroke="#444" strokeWidth="1.4"><path d="M10 1L4 8L9 13L15 7L9 2M15 7Q18 10 16 12" /><rect x="1" y="15" width="17" height="4" rx="2" stroke="#b08a8a" /><path d="M7 19L12 15" stroke="#d33" /></svg></Cell>
          <Cell label="边框" chev className="w-[50px]"><svg className={ic} viewBox="0 0 20 20" fill="none" stroke="#444" strokeWidth="1.5"><rect x="2" y="2" width="16" height="16" /><path d="M10 3V17M3 10H17" stroke="#999" strokeDasharray="2 1" /></svg></Cell>
        </div>
        <Launcher />
      </Group>

      <Group className="w-[353px] pl-[9px]">
        <div className="my-1.5 flex h-[65px] w-[257px] items-center rounded-lg border border-[#b8b8b8] px-0.5 text-[17px] font-bold text-black">
          <button className="h-[59px] w-[115px] rounded border-4 border-[#cdcdcd] whitespace-pre">标题<span className="font-['Liberation_Serif',serif] font-normal">  2</span></button>
          <button className="flex-1 whitespace-pre">标题<span className="font-['Liberation_Serif',serif] font-normal">  3</span></button>
          <div className="flex h-full w-5 flex-col items-center justify-around">
            <ChevronUp className="size-2.5" strokeWidth={3.5} />
            <ChevronDown className="size-2.5" strokeWidth={3.5} />
            <ChevronDown className="size-2.5 border-t" strokeWidth={3.5} />
          </div>
        </div>
        <Big label="样式集" chev className="-mt-1.5 ml-3 w-[58px]"><svg className="size-6" viewBox="0 0 24 24" fill="none" stroke="#444" strokeWidth="1.4"><path d="M2 22L11 2L15 12M5 15H12" /><path d="M22 8L14 18Q12 18 12 23Q17 23 17 20L22 12" stroke="#c9501e" /></svg></Big>
        <Launcher />
      </Group>

      <Group className="w-[187px] pl-[14px]">
        <Big label="查找替换" chev className="-mt-1.5 w-[74px]"><Search className="size-6" strokeWidth={sw} /></Big>
        <div className="flex flex-col justify-center gap-2 pb-1 pl-[14px] text-[15px]">
          <button className="flex h-7 items-center gap-1"><MousePointer2 className={ic} strokeWidth={sw} />选择<Tiny /></button>
          <button className="flex h-7 items-center gap-1"><svg className={ic} viewBox="0 0 20 20" fill="none" stroke="currentColor" strokeWidth="1.5"><path d="M11 9L14 2L18 9M12 7H17M2 7Q1 3 7 3M5 1L8 3L5 6M1 12H9M5 10V12M2 19L8 12M2 13L9 19M18 12Q18 17 12 17M14 14L11 17L14 20" /></svg>翻译<Tiny /></button>
        </div>
      </Group>

      <Group className="w-[209px] pl-[14px]">
        <Big label="AI 排版" chev className="-mt-1.5 w-[62px]"><svg className="size-6" viewBox="0 0 24 24" fill="none" stroke="#444" strokeWidth="1.4"><path d="M10 22H2V2H16L21 7V11M6 9H15M6 14H12" /><path d="M18 13Q18 18 23 18Q18 18 18 23Q18 18 13 18Q18 18 18 13Z" stroke="#7338e0" strokeWidth="1.8" /></svg></Big>
        <Big label="排版" chev className="-mt-1.5 ml-[15px] w-[44px]"><svg className="size-6" viewBox="0 0 24 24" fill="none" stroke="#444" strokeWidth="1.4"><path d="M1 2H23M1 22H23M2 18L7 6L12 18M4 14H10M14 7H23M14 12H23M14 17H23" /></svg></Big>
        <Big label="排列" chev className="-mt-1.5 ml-[14px] w-[44px]"><svg className="size-6" viewBox="0 0 24 24" fill="none" stroke="#444" strokeWidth="1.4"><path d="M5 11H1V1H11V5M19 13H23V23H13V19" /><rect x="5" y="5" width="14" height="14" stroke="#2457d6" /></svg></Big>
      </Group>

      <Big label="智能公文" className="ml-[14px] w-16"><svg className="size-6" viewBox="0 0 24 24" fill="none" stroke="#444" strokeWidth="1.4"><path d="M2 2H15L22 8V22H2ZM15 2V8H22" /><path d="M12 8L13 11H16L14 13L15 16L12 14L9 16L10 13L8 11H11ZM6 19H18" stroke="#2457d6" /></svg></Big>
    </div>
  );
}

const OUTLINE: { level: 0 | 1 | 2; text: string; open?: boolean }[] = [
  { level: 0, text: '第二章  开发技术介绍', open: true },
  { level: 1, text: '2.1  系统开发平台' },
  { level: 1, text: '2.2  平台开发相关技术', open: true },
  { level: 2, text: '2.2.1    Java 技术' },
  { level: 2, text: '2.2.2    Mysql 数据库' },
  { level: 2, text: '2.2.4    B/S 架构' },
  { level: 2, text: '2.2.5    Springboot 框架' },
  { level: 0, text: '第三章  系统分析', open: true },
  { level: 1, text: '3.1  系统概述' },
  { level: 1, text: '3.2  功能性需求分析', open: true },
  { level: 2, text: '3.2.1  管理员功能需求介绍' },
  { level: 2, text: '3.2.2  项目负责人功能需求介绍' },
  { level: 2, text: '3.2.3  项目成员功能需求介绍 ' },
  { level: 1, text: '3.3  非功能性需求分析', open: true },
  { level: 2, text: '3.3.1  界面需求' },
  { level: 2, text: '3.3.2  安全性需求' },
  { level: 2, text: '3.3.3  可行性分析' },
  { level: 0, text: '第四章系统设计', open: true },
  { level: 1, text: '4.1 系统架构设计' },
  { level: 1, text: '4.2 系统基本结构' },
  { level: 1, text: '4.3  系统流程图设计' },
  { level: 1, text: '4.4  数据库设计', open: true },
];

function Sidebar() {
  const tool = 'flex h-[29px] w-[29px] items-center justify-center rounded border border-[#c9c9c9] bg-white shadow-xs';
  return (
    <aside className="relative flex w-[317px] shrink-0 flex-col border-r border-[#c4c6c7]">
      <div className="flex h-[60px] items-center pl-[15px] text-[17px]">
        <div className="flex w-[225px] gap-[22px] overflow-hidden whitespace-nowrap">
          <button className="border-b-2 border-[#1d5fc9] py-[3px] leading-6 font-bold text-[#1d5fc9]">目录</button>
          <button>章节</button>
          <button>书签</button>
          <button>查找和替换</button>
        </div>
        <button aria-label="更多面板" className="flex h-[30px] w-6 items-center justify-center rounded-md bg-[#ededee]"><ChevronRight className="size-5" strokeWidth={1.5} /></button>
        <button aria-label="关闭导航" className="ml-[13px]"><X className="size-[18px]" strokeWidth={1.4} /></button>
      </div>
      <div className="mt-2 flex gap-1.5 pl-[15px]">
        <button aria-label="展开" className={tool}><ChevronDown className="size-4" strokeWidth={2.6} /></button>
        <button aria-label="收起" className={tool}><ChevronUp className="size-4" strokeWidth={2.6} /></button>
        <button aria-label="新增标题" className={tool}><Plus className="size-4" strokeWidth={2.8} /></button>
        <button aria-label="删除标题" className={tool}><Minus className="size-4" strokeWidth={2.6} /></button>
        <button className="mr-4 ml-auto flex h-[29px] w-[113px] items-center justify-center gap-1 rounded border border-[#c9c9c9] bg-white text-[15px] shadow-xs">
          <svg className="size-5" viewBox="0 0 20 16" fill="none" stroke="#333" strokeWidth="1.2"><path d="M1 15L8 1H12L6 15ZM9 8L13 6L19 15H15ZM12 1L13 6" /></svg>AI识别目录
        </button>
      </div>
      <div className="mt-[21px] min-h-0 flex-1 overflow-hidden">
        <ul className="-mt-[17px] flex h-[calc(100%+17px)] flex-col text-[15px] text-[#222]">
          {OUTLINE.map((item) => (
            <li key={item.text} className={clsx('flex flex-1 items-center', item.level === 0 && 'pl-[31px]', item.level === 1 && 'pl-[51px]', item.level === 2 && 'pl-[71px]')}>
              <span className="w-[18px] shrink-0">
                {item.open && <svg className="size-[10px]" viewBox="0 0 10 10"><path d="M0 1H10L5 9Z" fill="#777" /></svg>}
              </span>
              <a href="#outline" className="w-[190px] truncate leading-5 whitespace-pre">{item.text}</a>
            </li>
          ))}
        </ul>
      </div>
      <span className="absolute top-[218px] right-[3px] h-[333px] w-[9px] rounded-full bg-[#c9c9c9]" />
    </aside>
  );
}

function ScrollRail() {
  return (
    <div className="flex w-[19px] shrink-0 flex-col items-center border-r border-[#c4c6c7] text-[#666]">
      <svg className="mt-2.5 h-3 w-[10px]" viewBox="0 0 10 12" fill="#777"><path d="M1 1H9L5 5ZM0 6H10V11H0Z" /><path d="M3 8H7" stroke="#fff" /></svg>
      <svg className="mt-2.5 size-2" viewBox="0 0 8 8" fill="#777"><path d="M0 7H8L4 1Z" /></svg>
      <span className="mt-[43px] h-[320px] w-[10px] rounded-full bg-[#c9c8c6]" />
      <svg className="mt-auto size-2" viewBox="0 0 8 8" fill="#777"><path d="M0 1H8L4 7Z" /></svg>
      <svg className="mt-3 h-[9px] w-2" viewBox="0 0 8 10" fill="#777"><path d="M0 5H8L4 0ZM0 10H8L4 5Z" /></svg>
      <span className="mt-2.5 size-[7px] border-[1.5px] border-[#777]" />
      <svg className="mt-3 mb-3 h-[9px] w-2" viewBox="0 0 8 10" fill="#777"><path d="M0 0H8L4 5ZM0 5H8L4 10Z" /></svg>
    </div>
  );
}

function StatusBar() {
  const view = 'flex w-10 items-center justify-center';
  return (
    <div className="flex h-[30px] shrink-0 items-center border-t border-[#c4c6c5] bg-[#e3e4e2] pl-5 text-[15px] whitespace-nowrap text-[#333]">
      <span className="w-[62px]">页码: 1</span><Rule className="h-[18px]" />
      <span className="w-[101px] pl-[15px]">页面: 5/40</span><Rule className="h-[18px]" />
      <span className="w-[82px] pl-4">节: 5/7</span>
      <span className="w-[121px]">设置值: 4.1厘米</span><Rule className="h-[18px]" />
      <span className="w-[76px] pl-[21px]">行: 2</span>
      <span className="w-[55px]">列: 1</span><Rule className="h-[18px]" />
      <span className="w-[113px] pl-[15px]">字数: 13818</span><Rule className="h-[18px]" />
      <button className="flex w-[147px] items-center gap-1.5 pl-[15px]">拼写检查: 打开<Tiny /></button><Rule className="h-[18px]" />
      <button className="w-20 text-center">AI 校对</button><Rule className="h-[18px]" />
      <button className="flex items-center gap-2 pl-[18px]"><svg className="size-4" viewBox="0 0 16 16"><path d="M8 1L15.5 15H.5Z" fill="#f8c256" /><path d="M8 6V11M8 12V14" stroke="#333" strokeWidth="1.5" /></svg>缺失字体</button>
      <div className="ml-auto flex h-full items-center pr-[234px]">
        <button className={view} aria-label="护眼模式"><svg className="size-5" viewBox="0 0 20 20" fill="none" stroke="currentColor" strokeWidth="1.5"><path d="M1 10L5 5Q10 2 15 5L19 10L15 15Q10 18 5 15Z" /><circle cx="10" cy="10" r="2.5" /></svg></button>
        <Rule className="mx-[5px] h-[18px]" />
        <button className="mx-[5px] flex h-full w-[30px] items-center justify-center rounded-t-md bg-[#cdcfca]" aria-label="页面视图"><FileText className="size-[18px]" strokeWidth={1.5} /></button>
        <button className={view} aria-label="大纲"><svg className="size-[18px]" viewBox="0 0 18 18" fill="none" stroke="currentColor" strokeWidth="1.5"><path d="M1 2H3M6 2H17M4 9H6M9 9H17M4 16H6M9 16H17" /></svg></button>
        <button className={view} aria-label="演示"><Play className="size-[18px]" strokeWidth={1.5} /></button>
        <button className={view} aria-label="Web版式"><Globe className="size-[18px]" strokeWidth={1.5} /></button>
        <button className={view} aria-label="写作模式"><Brush className="size-[18px]" strokeWidth={1.5} /></button>
        <Rule className="mx-1.5 h-[18px]" />
        <button className={view} aria-label="适应窗口"><Fullscreen className="size-[18px]" strokeWidth={1.5} /></button>
        <button className="ml-5 flex w-[80px] items-center gap-[17px]">20%<Tiny /></button>
        <Minus className="size-5" strokeWidth={2} />
      </div>
    </div>
  );
}

const SogouS = ({ className }: { className?: string }) => (
  <svg className={className} viewBox="0 0 38 36"><path d="M4 5L30 0Q33 0 34 3L38 28Q38 31 35 32L9 36Q6 36 5 33L0 9Q0 6 4 5Z" fill="#f2541b" /><path d="M28 10Q18 6 12 10Q8 15 17 17Q31 19 27 25Q22 30 10 26" fill="none" stroke="#fff" strokeWidth="4.5" /></svg>
);

function InputMethodBar() {
  return (
    <div className="absolute right-0 bottom-[50px] z-20 flex h-8 w-[236px] items-center justify-end rounded-l-md border border-[#a9c0dc] bg-white text-[#0a6fd8]">
      <SogouS className="absolute -left-4 -top-1 h-9 w-[39px]" />
      <span className="w-[30px] text-center text-[18px] leading-7 font-bold">中</span>
      <span className="flex w-[30px] justify-center"><svg className="size-[18px]" viewBox="0 0 18 18"><circle cx="4" cy="5" r="2.200" fill="none" stroke="currentColor" strokeWidth="1.600" /><path d="M11 9Q14 7 16 10Q16 14 12 16L11 15Q13 14 13 12Q11 12 11 9Z" fill="currentColor" /></svg></span>
      <span className="flex w-[30px] justify-center"><Mic className="size-[18px]" fill="currentColor" /></span>
      <span className="flex w-[30px] justify-center"><svg className="h-4 w-[18px]" viewBox="0 0 18 16" fill="none" stroke="currentColor" strokeWidth="1.5"><rect x="1" y="1" width="16" height="14" rx="1" /><path d="M1 5H17M1 9H17M5 1V12M9 1V12M13 1V12M4 12H14" /></svg></span>
      <span className="relative flex w-[30px] justify-center"><Shirt className="size-[19px] text-[#b06df0]" fill="#8f7bf5" /><span className="absolute -top-1 right-0.5 size-2 rounded-full bg-[#ff5a3c]" /></span>
      <span className="grid w-[30px] grid-cols-2 place-content-center gap-0.5 px-[7px]"><i className="h-[7px] rounded-xs bg-current" /><i className="h-[7px] rounded-full bg-current" /><i className="h-[7px] rounded-xs bg-current" /><i className="h-[7px] rounded-xs bg-current" /></span>
      <span className="flex w-[31px] justify-center"><svg className="size-6" viewBox="0 0 24 24"><circle cx="12" cy="12" r="11" fill="#fbeee9" /><path d="M3 9Q12 6 20 8L18 14Q11 16 4 13Z" fill="#ea6a24" /><path d="M5 10L8 13L11 10M14 10L17 12" stroke="#222" strokeWidth="2" fill="none" /><path d="M22 5L23 9M20 7H24" stroke="#f8c41c" strokeWidth="2" /></svg></span>
    </div>
  );
}

function MonitorPanel() {
  return (
    <div className="absolute top-[76px] right-0 z-20 flex h-[233px] w-[41px] flex-col items-center rounded-l-xl bg-[#6d7078]/50 pl-1 text-[12px] text-white">
      <span className="mt-[15px] flex h-[19px] w-4 items-center justify-center rounded-sm bg-[#f58a3c] text-[13px] leading-none font-bold [clip-path:polygon(0_0,100%_0,100%_75%,50%_100%,0_75%)]">1</span>
      <span className="mt-[11px] h-px w-full bg-[#8c8e95]" />
      <span className="mt-2 h-[38px] w-3 rounded-full bg-[linear-gradient(#bcbcc0_12%,#ee7d30_14%,#d9a81e_45%,#5cc36a_75%,#2fc0b4)]" />
      <span className="mt-[9px] h-px w-full bg-[#8ea3aa]" />
      <span className="mt-[10px] leading-[14px]">0.0</span>
      <span className="flex items-center leading-[14px] text-[#e3e3e3]"><ArrowUp className="size-3 text-[#1ea3ff]" strokeWidth={3} />K/s</span>
      <span className="mt-1 leading-[14px]">0.2</span>
      <span className="flex items-center leading-[14px] text-[#e3e3e3]"><ArrowDown className="size-3 text-[#10b53c]" strokeWidth={3} />K/s</span>
      <span className="mt-[7px] h-px w-full bg-[#8ea3aa]" />
      <Crop className="mt-3 size-5 text-[#dcdcdc]" strokeWidth={2} />
      <svg className="absolute top-[132px] -left-2 h-[54px] w-7" viewBox="0 0 28 54" fill="none" stroke="#333" strokeWidth="1.6"><path d="M0 7H17" stroke="#666" /><circle cx="7" cy="47" r="2" /><circle cx="14" cy="47" r="2" /><circle cx="21" cy="47" r="2" /></svg>
    </div>
  );
}

function Taskbar() {
  const app = 'flex h-full w-[62px] items-center justify-center';
  const on = 'border-b-[3px] border-[#76b9ed] pt-[3px]';
  return (
    <div className="flex h-[50px] shrink-0 items-center bg-[#1e1e1e] text-white">
      <button className="flex w-[60px] justify-center" aria-label="开始菜单">
        <svg className="size-5" viewBox="0 0 20 20" fill="#fff"><path d="M0 3L9 1.5V9.5H0ZM10 1.3L20 0V9.5H10ZM0 10.5H9V18.5L0 17ZM10 10.5H20V20L10 18.7Z" /></svg>
      </button>
      <div className="relative flex h-full w-[360px] items-center border border-[#bbb] bg-[#f2f2f2] pl-[13px] text-black">
        <Search className="size-[22px] -scale-x-100" strokeWidth={1.5} />
        <input aria-label="搜索" placeholder="搜索" className="ml-[14px] w-40 bg-transparent text-[18px] placeholder:text-[#333]" />
        <svg className="absolute top-1.5 right-3 h-9 w-[78px]" viewBox="0 0 78 36">
          <path d="M29 2Q31 16 43 17Q31 19 29 34Q27 19 15 17Q27 16 29 2Z" fill="#fbb917" stroke="#fbb917" strokeWidth="3" strokeLinejoin="round" />
          <path d="M57 15Q58 22 64 23Q58 24 57 31Q56 24 50 23Q56 22 57 15Z" fill="#f9b531" stroke="#f9b531" strokeWidth="1.5" />
          <path d="M6 24Q7 28 11 29Q7 30 6 34Q5 30 1 29Q5 28 6 24Z" fill="#0aa2ee" stroke="#0aa2ee" />
          <circle cx="49" cy="5" r="2.6" fill="#f0642a" /><circle cx="72" cy="32" r="2.4" fill="#8cc63f" />
        </svg>
      </div>
      <div className="flex h-full pl-[3px]">
        <button className={app} aria-label="Chrome">
          <svg className="size-[30px]" viewBox="0 0 30 30"><circle cx="15" cy="15" r="15" fill="#fbc116" /><path d="M15 15L2 7.5A15 15 0 0 1 28 7.5Z" fill="#e33b2e" /><path d="M15 15L2 7.5A15 15 0 0 0 15 30L21.5 18.7Z" fill="#2ba24c" /><path d="M15 8H28.3A15 15 0 0 1 15 30L21 18Z" fill="#fbc116" /><circle cx="15" cy="15" r="7" fill="#fff" /><circle cx="15" cy="15" r="5.5" fill="#4285f4" /></svg>
        </button>
        <button className={clsx(app, on)} aria-label="文件资源管理器">
          <svg className="size-7" viewBox="0 0 28 28"><path d="M1 4H10L12 7H27V25H1Z" fill="#eeb22f" /><path d="M1 9H27V24H1Z" fill="#fcd667" /><path d="M5 26V17Q5 15 7 15H21Q23 15 23 17V26H18V21H10V26Z" fill="#2f95dc" /></svg>
        </button>
        <button className={clsx(app, on, 'bg-[#4c4c4c]')} aria-label="WPS"><WpsMark className="size-7" /></button>
        <button className={clsx(app, 'border-b-[3px] border-[#ff7a00] bg-[#a65c28] pt-[3px]')} aria-label="QQ">
          <svg className="size-[30px]" viewBox="0 0 30 30"><rect width="30" height="30" rx="7" fill="#fff" /><path d="M9 14Q8 4 15 4Q22 4 21 14L24 20L21 20Q21 25 15 25Q9 25 9 20L6 20Z" fill="#1a1a1a" /><ellipse cx="15" cy="20" rx="4.5" ry="4.5" fill="#fff" /><path d="M9 14Q15 18 21 14V17Q15 20 9 17Z" fill="#e52d27" /><ellipse cx="15" cy="11.5" rx="3.5" ry="1.4" fill="#f7a41c" /><circle cx="13" cy="8" r="1.3" fill="#fff" /><circle cx="17" cy="8" r="1.3" fill="#fff" /><path d="M9 25H14M16 25H21" stroke="#f7a41c" strokeWidth="2" /></svg>
        </button>
        <button className={clsx(app, on)} aria-label="网易云音乐">
          <svg className="size-[30px]" viewBox="0 0 30 30" fill="none"><rect width="30" height="30" rx="7" fill="#f5061b" /><path d="M20 5Q16 4 16 8L18 17Q18 20 15 20Q12 20 12 17Q12 13 17 12Q23 13 23 18Q22 25 15 25Q7 24 7 17Q7 11 12 9" stroke="#fff" strokeWidth="2.2" /></svg>
        </button>
        <button className={clsx(app, on)} aria-label="ToDesk">
          <svg className="size-[30px]" viewBox="0 0 30 30"><rect width="30" height="30" rx="7" fill="#1d6dfa" /><path d="M23 0Q30 0 30 7Q24 7 23 0Z" fill="#14c6f7" /><path d="M6 10L14 8L13 3L18 5L18 9L26 13L18 14V26H13V14L6 13Z" fill="#fff" /></svg>
        </button>
      </div>
      <div className="ml-auto flex h-full items-center">
        <svg className="size-7" viewBox="0 0 28 28"><rect width="28" height="28" rx="5" fill="#40b4f5" /><path d="M0 8V5Q0 0 5 0H23Q28 0 28 5V8Z" fill="#0d84dc" /><g fill="#fff"><circle cx="9" cy="14" r="1.6" /><circle cx="14" cy="14" r="1.6" /><circle cx="19" cy="14" r="1.6" /><circle cx="9" cy="20" r="1.6" /><circle cx="14" cy="20" r="1.6" /><circle cx="19" cy="20" r="1.6" /></g></svg>
        <span className="ml-[11px] text-[18px]">十月革命纪念日</span>
        <div className="ml-[25px] flex items-center">
          <span className="flex w-[30px] justify-center"><ChevronUp className="size-6" strokeWidth={1.3} /></span>
          <span className="flex w-[30px] justify-center"><span className="relative"><WpsMark className="size-[18px]" /><span className="absolute right-0 -bottom-0.5 size-2 rounded-full bg-[#1ba8f5]" /></span></span>
          <span className="flex w-[30px] justify-center"><svg className="size-[18px]" viewBox="0 0 18 18"><path d="M9 0L17 3V9Q16 15 9 18Q2 15 1 9V3Z" fill="#fff" /><path d="M9 1.5L15.5 4V9Q15 14 9 16.5Q3 14 2.5 9V4Z" fill="#3351e8" /><path d="M5 6L9 12L13 6" stroke="#fff" strokeWidth="2" fill="none" /></svg></span>
          <span className="flex w-[30px] justify-center"><svg className="size-[18px]" viewBox="0 0 18 18"><rect width="18" height="18" rx="4" fill="#1287f5" /><path d="M5 3Q14 5 14 11L11 16L10 13Q6 12 5 3Z" fill="#fff" /></svg></span>
          <span className="flex w-[30px] justify-center"><svg className="h-4 w-5" viewBox="0 0 20 16" fill="none" stroke="#fff" strokeWidth="1.3"><path d="M7 4H18V13H4V9M19 7V10M1 2V6H5V2M3 6V10M2 0V2M4 0V2" /></svg></span>
          <span className="flex w-[30px] justify-center"><svg className="size-[18px]" viewBox="0 0 18 18" fill="none" stroke="#fff" strokeWidth="1.3"><path d="M1 16A15 15 0 0 1 16 2M5 16A11 11 0 0 1 16 6M9 16A7 7 0 0 1 16 10M13 16A3 3 0 0 1 16 14" /></svg></span>
          <span className="flex w-[30px] justify-center"><Volume2 className="size-5" strokeWidth={1.3} /></span>
          <span className="w-[30px] text-center text-[18px]">中</span>
          <span className="ml-1 flex w-[34px] justify-center"><SogouS className="h-[18px] w-5" /></span>
        </div>
        <div className="ml-2 w-[88px] text-center text-[15px] leading-[23px]">22:17<br />2025/11/7</div>
        <span className="relative mr-[24px] ml-[18px]">
          <svg className="h-5 w-5" viewBox="0 0 20 20"><path d="M0 0H20V16H10L6 20V16H0Z" fill="#fff" /><path d="M3 4H17M3 8H17M3 12H10" stroke="#333" strokeWidth="1.3" /></svg>
          <span className="absolute top-2 left-2.5 flex size-5 items-center justify-center rounded-full border border-[#aaa] bg-[#222] text-[14px] font-bold">2</span>
        </span>
        <Rule className="mr-[5px] h-full bg-[#666]" />
      </div>
    </div>
  );
}

export default function App() {
  return (
    <div className="relative flex h-screen flex-col overflow-hidden bg-[linear-gradient(90deg,#e3e6e5,#e5e5ea_45%,#e2e4e5)] font-['Open_Sans','Noto_Sans_CJK_SC',sans-serif] text-[#222]">
      <TitleBar />
      <MenuBar />
      <Ribbon />
      <div className="flex min-h-0 flex-1 bg-[#e3e3e2]">
        <Sidebar />
        <main className="flex min-w-0 flex-1 justify-center overflow-hidden"><Pages /></main>
        <ScrollRail />
        <div className="w-[70px] shrink-0 border-r-[10px] border-[#eeeeee]" />
      </div>
      <StatusBar />
      <Taskbar />
      <MonitorPanel />
      <InputMethodBar />
    </div>
  );
}
